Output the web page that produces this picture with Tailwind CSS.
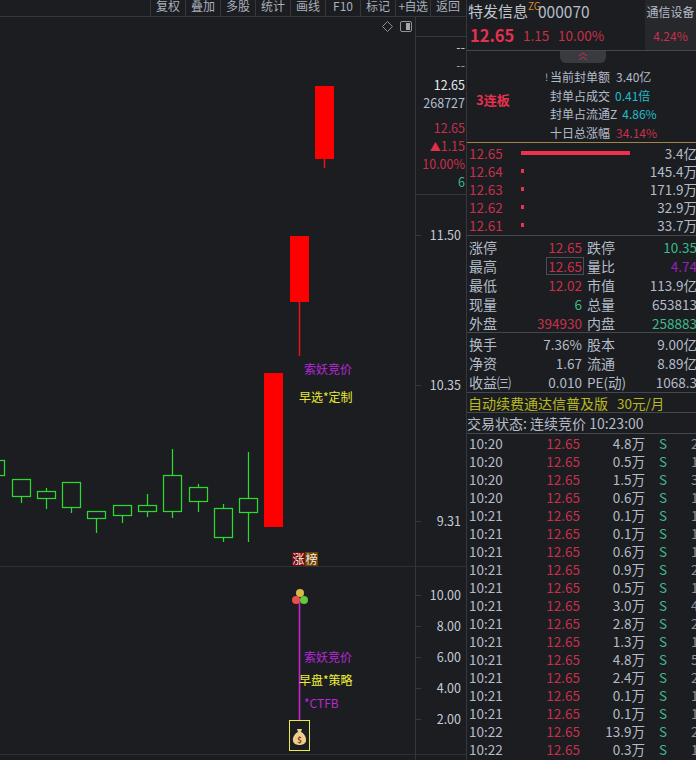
<!DOCTYPE html>
<html lang="zh-CN">
<head>
  <meta charset="UTF-8" />
  <title>特发信息 000070</title>
  <script src="https://cdn.jsdelivr.net/npm/@tailwindcss/browser@4"></script>
</head>
<body class="bg-[#1b1d21] font-['Noto_Sans_CJK_SC','Liberation_Sans',sans-serif] text-[#b4bcc8]">
  <div class="flex w-[696px] h-[760px] overflow-hidden">

    <!-- left: toolbar + chart + axis -->
    <div class="w-[467px] shrink-0 flex flex-col border-r border-[#34373c]">
      <div class="flex justify-end h-[17px] shrink-0 border-b border-[#34373c] text-[12px] leading-[12px] text-[#a8b0bc] overflow-hidden pr-[1px]">
        <div class="w-[35px] border-l border-[#34373c] text-center">复权</div>
        <div class="w-[35px] border-l border-[#34373c] text-center">叠加</div>
        <div class="w-[35px] border-l border-[#34373c] text-center">多股</div>
        <div class="w-[35px] border-l border-[#34373c] text-center">统计</div>
        <div class="w-[35px] border-l border-[#34373c] text-center">画线</div>
        <div class="w-[35px] border-l border-[#34373c] text-center">F10</div>
        <div class="w-[35px] border-l border-[#34373c] text-center">标记</div>
        <div class="w-[35px] border-l border-[#34373c] text-center whitespace-nowrap tracking-[-0.5px]">+自选</div>
        <div class="w-[35px] border-l border-[#34373c] text-center">返回</div>
      </div>

      <div class="flex flex-1 min-h-0">
        <!-- candle canvas -->
        <div class="relative w-[415px] shrink-0">
          <svg class="absolute inset-0" width="415" height="743" viewBox="0 17 415 743" fill="none">
            <line x1="0" y1="566.5" x2="415" y2="566.5" stroke="#2e3135" />
            <line x1="0" y1="754.5" x2="415" y2="754.5" stroke="#2e3135" />

            <!-- diamond + panel toggle -->
            <path d="M387.5 21.5 L392.5 26.5 L387.5 31.5 L382.5 26.5 Z" stroke="#8a8f96" />
            <rect x="400.5" y="21.5" width="11" height="10" rx="1.5" stroke="#8f949b" />
            <rect x="406" y="23" width="4" height="7" fill="#a4a9b0" />

            <!-- falling bars -->
            <g stroke="#2ed82e" stroke-width="1.25">
              <rect x="-5.5" y="460.5" width="10" height="15" />
              <rect x="12.5" y="479.5" width="18" height="17" /><line x1="21.5" y1="497" x2="21.5" y2="503" />
              <rect x="37.5" y="491.5" width="18" height="7" /><line x1="46.5" y1="488" x2="46.5" y2="491" /><line x1="46.5" y1="499" x2="46.5" y2="509" />
              <rect x="62.5" y="482.5" width="18" height="25" /><line x1="71.5" y1="508" x2="71.5" y2="513" />
              <rect x="87.5" y="511.5" width="18" height="7" /><line x1="96.5" y1="519" x2="96.5" y2="533" />
              <rect x="113.5" y="505.5" width="18" height="10" /><line x1="122.5" y1="516" x2="122.5" y2="523" />
              <rect x="138.5" y="505.5" width="18" height="6" /><line x1="147.5" y1="494" x2="147.5" y2="505" /><line x1="147.5" y1="512" x2="147.5" y2="517" />
              <rect x="163.5" y="475.5" width="18" height="36" /><line x1="172.5" y1="449" x2="172.5" y2="475" /><line x1="172.5" y1="512" x2="172.5" y2="518" />
              <rect x="189.5" y="487.5" width="18" height="14" /><line x1="198.5" y1="484" x2="198.5" y2="487" /><line x1="198.5" y1="502" x2="198.5" y2="512" />
              <rect x="214.5" y="508.5" width="18" height="29" /><line x1="223.5" y1="504" x2="223.5" y2="508" /><line x1="223.5" y1="538" x2="223.5" y2="542" />
              <rect x="239.5" y="498.5" width="18" height="14" /><line x1="248.5" y1="452" x2="248.5" y2="498" /><line x1="248.5" y1="513" x2="248.5" y2="542" />
            </g>

            <!-- limit-up bars -->
            <rect x="264" y="373" width="19" height="154" fill="#ff0000" />
            <rect x="290" y="236" width="19" height="66" fill="#ff0000" />
            <line x1="299.5" y1="302" x2="299.5" y2="356" stroke="#e81414" stroke-width="1.5" />
            <rect x="315" y="86" width="19" height="73" fill="#ff0000" />
            <line x1="324.5" y1="159" x2="324.5" y2="168" stroke="#e81414" stroke-width="1.5" />

            <!-- indicator pane -->
            <line x1="299.5" y1="600" x2="299.5" y2="720" stroke="#c428cc" stroke-width="1.6" />
            <circle cx="300" cy="593" r="4" fill="#d8b84a" />
            <circle cx="296" cy="600" r="4" fill="#e8504a" />
            <circle cx="304" cy="600" r="4" fill="#62c83c" />
            <rect x="289.5" y="720.5" width="20" height="30" stroke="#f0e848" />
            <path d="M297 729 L302 729 L301 732 C305 734 306.5 738 306 741 C305.5 744 302 745 299.5 745 C297 745 293.5 744 293 741 C292.5 738 294 734 298 732 Z" fill="#ecd08a" />
            <text x="299.5" y="743" text-anchor="middle" font-size="8" font-weight="700" fill="#8a2a20">$</text>
          </svg>

          <div class="absolute left-[304px] top-[344px] text-[12px] leading-[16px] text-[#b828d8]">索妖竞价</div>
          <div class="absolute left-[299px] top-[372px] text-[12px] leading-[16px] text-[#e8e830]">早选*定制</div>
          <div class="absolute left-[292px] top-[535px] flex text-[12px] leading-[14px] text-[#f4ece0]">
            <span class="bg-[#720808] px-[0.5px]">涨</span><span class="bg-[#6a4206] px-[0.5px]">榜</span>
          </div>
          <div class="absolute left-[304px] top-[632px] text-[12px] leading-[16px] text-[#b828d8]">索妖竞价</div>
          <div class="absolute left-[299px] top-[655px] text-[12px] leading-[16px] text-[#f0f038]">早盘*策略</div>
          <div class="absolute left-[304px] top-[678px] text-[12px] leading-[16px] text-[#b828d8]">*CTFB</div>
        </div>

        <!-- price axis -->
        <div class="relative flex-1 border-l border-[#34373c] text-right text-[12.5px] leading-[18px]">
          <div class="h-[20px] border-b border-[#34373c]"></div>
          <div class="h-[158px] border-b border-[#34373c] pr-[1px] flex flex-col">
            <div class="mt-[1px] h-[18px] text-[#c8d0da]">--</div>
            <div class="h-[18px] text-[#9aa2ae]">--</div>
            <div class="h-[18px] mt-[2px] text-[#e6eaf0]">12.65</div>
            <div class="h-[17px] text-[#b4c0d4] whitespace-nowrap">268727</div>
            <div class="h-[18px] mt-[8px] text-[#c8304a]">12.65</div>
            <div class="h-[18px] text-[#c8304a] whitespace-nowrap"><span class="text-[#e0304c] text-[11px]">▲</span>1.15</div>
            <div class="h-[18px] text-[#c8304a] whitespace-nowrap">10.00%</div>
            <div class="h-[18px] text-[#3fb88c]">6</div>
          </div>
          <div class="absolute right-[5px] top-[209px] text-[#c4ccd6]">11.50</div>
          <div class="absolute right-[5px] top-[359px] text-[#c4ccd6]">10.35</div>
          <div class="absolute right-[5px] top-[495px] text-[#c4ccd6]">9.31</div>
          <div class="absolute left-0 top-[218px] w-[5px] h-px bg-[#34373c]"></div>
          <div class="absolute left-0 top-[368px] w-[5px] h-px bg-[#34373c]"></div>
          <div class="absolute left-0 top-[504px] w-[5px] h-px bg-[#34373c]"></div>
          <div class="absolute left-0 right-0 top-[549px] h-px bg-[#2e3135]"></div>
          <div class="absolute right-[5px] top-[569px] text-[#c4ccd6]">10.00</div>
          <div class="absolute right-[5px] top-[600px] text-[#c4ccd6]">8.00</div>
          <div class="absolute right-[5px] top-[631px] text-[#c4ccd6]">6.00</div>
          <div class="absolute right-[5px] top-[662px] text-[#c4ccd6]">4.00</div>
          <div class="absolute right-[5px] top-[693px] text-[#c4ccd6]">2.00</div>
          <div class="absolute left-0 top-[578px] w-[5px] h-px bg-[#34373c]"></div>
          <div class="absolute left-0 top-[609px] w-[5px] h-px bg-[#34373c]"></div>
          <div class="absolute left-0 top-[640px] w-[5px] h-px bg-[#34373c]"></div>
          <div class="absolute left-0 top-[671px] w-[5px] h-px bg-[#34373c]"></div>
          <div class="absolute left-0 top-[702px] w-[5px] h-px bg-[#34373c]"></div>
          <div class="absolute left-0 right-0 top-[737px] h-px bg-[#2e3135]"></div>
        </div>
      </div>
    </div>

    <!-- right: quote panel -->
    <div class="w-[229px] shrink-0 flex flex-col overflow-hidden text-[13.5px] leading-[18px]">
      <!-- title -->
      <div class="flex h-[51px] shrink-0 border-b border-[#44474c]">
        <div class="w-[178px] shrink-0 pl-[1px]">
          <div class="flex h-[22px] items-center">
            <span class="text-[15px] text-[#c0c6d0] whitespace-nowrap">特发信息</span>
            <span class="w-[10px] text-[10px] leading-[10px] text-[#d88a30] self-start mt-[1px] whitespace-nowrap">ZG</span>
            <span class="text-[15.5px] text-[#b4bcc8]">000070</span>
          </div>
          <div class="flex items-center h-[26px] pl-[2px] whitespace-nowrap text-[#c8304a]">
            <span class="text-[16.5px] font-bold text-[#e6304f] w-[53px]">12.65</span>
            <span class="w-[35px]">1.15</span>
            <span>10.00%</span>
          </div>
        </div>
        <div class="flex-1 bg-[#26282c] text-center text-[12px] pt-[3px]">
          <div class="h-[24px] whitespace-nowrap text-[#b4bcc8]">通信设备</div>
          <div class="text-[#c8304a]">4.24%</div>
        </div>
      </div>

      <!-- seal stats -->
      <div class="relative h-[92px] shrink-0 border-b border-[#a08448] text-[12px] leading-[18.5px]">
        <div class="absolute left-[93px] top-0 w-[46px] h-[12px] rounded-b-[6px] bg-[#3a3b40] flex justify-center">
          <svg width="12" height="10" viewBox="0 0 12 10" fill="none" stroke="#c8304a"><path d="M2 5 L6 2 L10 5" /><path d="M2 9 L6 6 L10 9" /></svg>
        </div>
        <div class="absolute left-[9px] top-[40px] text-[13px] font-bold text-[#e6304f]">3连板</div>
        <div class="absolute left-[78px] top-[17px] text-[10px] text-[#a8b0bc]">!</div>
        <div class="pl-[83px] pt-[17px] whitespace-nowrap">
          <div class="flex gap-[6px]"><span>当前封单额</span><span>3.40亿</span></div>
          <div class="flex gap-[5px]"><span>封单占成交</span><span class="text-[#20bcc8]">0.41倍</span></div>
          <div class="flex gap-[5px]"><span>封单占流通Z</span><span class="text-[#20bcc8]">4.86%</span></div>
          <div class="flex gap-[6px]"><span>十日总涨幅</span><span class="text-[#c8304a]">34.14%</span></div>
        </div>
      </div>

      <!-- order book -->
      <div class="h-[93px] shrink-0 border-b border-[#44474c] w-[230px] pt-[0.5px]">
        <div class="flex items-center h-[18px]"><span class="w-[54px] pl-[2px] text-[#c8304a]">12.65</span><span class="w-[109px] h-[4px] bg-[#f0304c]"></span><span class="flex-1 text-right whitespace-nowrap">3.4亿</span></div>
        <div class="flex items-center h-[18px]"><span class="w-[54px] pl-[2px] text-[#c8304a]">12.64</span><span class="w-[3px] h-[4px] bg-[#f0304c]"></span><span class="flex-1 text-right whitespace-nowrap">145.4万</span></div>
        <div class="flex items-center h-[18px]"><span class="w-[54px] pl-[2px] text-[#c8304a]">12.63</span><span class="w-[3px] h-[4px] bg-[#f0304c]"></span><span class="flex-1 text-right whitespace-nowrap">171.9万</span></div>
        <div class="flex items-center h-[18px]"><span class="w-[54px] pl-[2px] text-[#c8304a]">12.62</span><span class="w-[3px] h-[4px] bg-[#f0304c]"></span><span class="flex-1 text-right whitespace-nowrap">32.9万</span></div>
        <div class="flex items-center h-[18px]"><span class="w-[54px] pl-[2px] text-[#c8304a]">12.61</span><span class="w-[3px] h-[4px] bg-[#f0304c]"></span><span class="flex-1 text-right whitespace-nowrap">33.7万</span></div>
      </div>

      <!-- quote grid -->
      <div class="h-[97px] shrink-0 border-b border-[#44474c] w-[229px] pt-[1px] grid grid-cols-[31px_85px_30px_82px] auto-rows-[19px] items-center pl-[2px] whitespace-nowrap">
        <span class="text-[14px]">涨停</span><span class="text-right pr-[3px] text-[#c8304a]">12.65</span><span class="text-[14px] ml-[2px]">跌停</span><span class="text-right text-[#3fb88c]">10.35</span>
        <span class="text-[14px]">最高</span><span class="text-right pr-[1px] text-[#c8304a]"><span class="inline-block border border-[#4a4d52] px-[1px] leading-[16px]">12.65</span></span><span class="text-[14px] ml-[2px]">量比</span><span class="text-right text-[#9a20b8]">4.74</span>
        <span class="text-[14px]">最低</span><span class="text-right pr-[3px] text-[#c8304a]">12.02</span><span class="text-[14px] ml-[2px]">市值</span><span class="text-right">113.9亿</span>
        <span class="text-[14px]">现量</span><span class="text-right pr-[3px] text-[#3fb88c]">6</span><span class="text-[14px] ml-[2px]">总量</span><span class="text-right">653813</span>
        <span class="text-[14px]">外盘</span><span class="text-right pr-[3px] text-[#c8304a]">394930</span><span class="text-[14px] ml-[2px]">内盘</span><span class="text-right text-[#3fb88c]">258883</span>
      </div>

      <div class="h-[60px] shrink-0 border-b border-[#44474c] w-[229px] pt-[1px] grid grid-cols-[31px_85px_30px_82px] auto-rows-[19px] items-center pl-[2px] whitespace-nowrap">
        <span class="text-[14px]">换手</span><span class="text-right pr-[3px]">7.36%</span><span class="text-[14px] ml-[2px]">股本</span><span class="text-right">9.00亿</span>
        <span class="text-[14px]">净资</span><span class="text-right pr-[3px]">1.67</span><span class="text-[14px] ml-[2px]">流通</span><span class="text-right">8.89亿</span>
        <span class="text-[14px]">收益㈢</span><span class="text-right pr-[3px]">0.010</span><span class="text-[13.5px] ml-[2px]">PE(动)</span><span class="text-right">1068.3</span>
      </div>

      <div class="h-[20px] shrink-0 border-b border-[#44474c] pl-[1px] flex gap-[9px] items-center text-[#b8b820] whitespace-nowrap">
        <span class="text-[14px]">自动续费通达信普及版</span><span>30元/月</span>
      </div>
      <div class="h-[21px] shrink-0 border-b border-[#44474c] text-[14px] flex items-center whitespace-nowrap">交易状态: 连续竞价 10:23:00</div>

      <!-- tick list -->
      <div id="ticks"></div>
    </div>
  </div>

  <script>
    const ticks = [
      ['10:20','4.8','2'],['10:20','0.5','1'],['10:20','1.5','3'],['10:20','0.6','1'],
      ['10:21','0.1','1'],['10:21','0.1','1'],['10:21','0.6','1'],['10:21','0.9','2'],
      ['10:21','0.5','1'],['10:21','3.0','4'],['10:21','2.8','2'],['10:21','1.3','1'],
      ['10:21','4.8','5'],['10:21','2.4','2'],['10:21','0.1','1'],['10:21','0.1','1'],
      ['10:22','13.9','2'],['10:22','0.3','1']
    ];
    document.getElementById('ticks').innerHTML = ticks.map(t => `
      <div class="flex h-[18px] items-center whitespace-nowrap">
        <span class="w-[69px] shrink-0 pl-[2px]">${t[0]}</span>
        <span class="w-[44px] shrink-0 text-[#c8304a] text-right">12.65</span>
        <span class="w-[65px] shrink-0 text-right">${t[1]}万</span>
        <span class="w-[14px] shrink-0 ml-[14px] text-[#3fb88c]">S</span>
        <span class="ml-[18px] shrink-0 text-[#8a929e]">${t[2]}</span>
      </div>`).join('');
  </script>
</body>
</html>
